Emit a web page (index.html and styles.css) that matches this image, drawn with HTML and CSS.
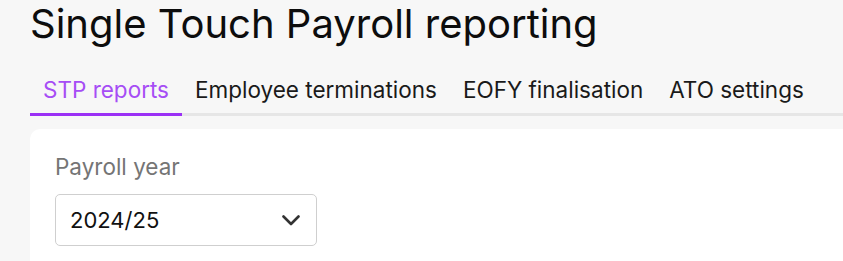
FILE: index.html
```html
<!DOCTYPE html>
<html lang="en">
<head>
  <meta charset="UTF-8">
  <meta name="viewport" content="width=device-width, initial-scale=1.0">
  <title>Single Touch Payroll reporting</title>
  <link rel="stylesheet" href="styles.css">
</head>
<body>
  <div class="page">
    <h1 class="page-title">Single Touch Payroll reporting</h1>

    <nav class="tabs">
      <a class="tab active" href="#">STP reports</a>
      <a class="tab" href="#">Employee terminations</a>
      <a class="tab" href="#">EOFY finalisation</a>
      <a class="tab" href="#">ATO settings</a>
    </nav>

    <div class="card">
      <label class="field-label" for="payroll-year">Payroll year</label>
      <div class="select" id="payroll-year">
        <span class="select-value">2024/25</span>
        <svg class="chevron" width="18" height="11" viewBox="0 0 18 11">
          <path d="M1.5 1.5 L9 9 L16.5 1.5" fill="none" stroke="#333" stroke-width="2.6" stroke-linecap="round" stroke-linejoin="round"/>
        </svg>
      </div>
    </div>
  </div>
</body>
</html>
```

FILE: styles.css
```css
body {
  margin: 0;
  padding: 0;
  background-color: #f7f7f7;
  font-family: Inter, "Noto Sans", sans-serif;
  color: #111;
  overflow: hidden;
}

.page {
  padding-left: 30px;
}

.page-title {
  margin: 0;
  font-size: 40px;
  line-height: 48px;
  font-weight: 400;
  color: #0d0d0d;
}

.tabs {
  display: flex;
  margin-top: 28px;
  border-bottom: 3px solid #e6e6e6;
}

.tab {
  padding: 0 13px 9px;
  margin-bottom: -3px;
  font-size: 22.5px;
  line-height: 28px;
  color: #1a1a1a;
  text-decoration: none;
  border-bottom: 3px solid transparent;
}

.tab.active {
  color: #a64df5;
  border-bottom-color: #9b30f5;
}

.card {
  margin-top: 13px;
  background: #fff;
  border-radius: 10px 0 0 0;
  padding: 24px 25px 0;
  height: 132px;
  box-sizing: border-box;
}

.field-label {
  display: block;
  font-size: 22.5px;
  line-height: 28px;
  color: #757575;
}

.select {
  margin-top: 13px;
  width: 262px;
  height: 52px;
  box-sizing: border-box;
  border: 1px solid #cfcfcf;
  border-radius: 5px;
  display: flex;
  align-items: center;
  justify-content: space-between;
  padding: 0 16px 0 14px;
}

.select-value {
  font-size: 22px;
  color: #111;
}
```
